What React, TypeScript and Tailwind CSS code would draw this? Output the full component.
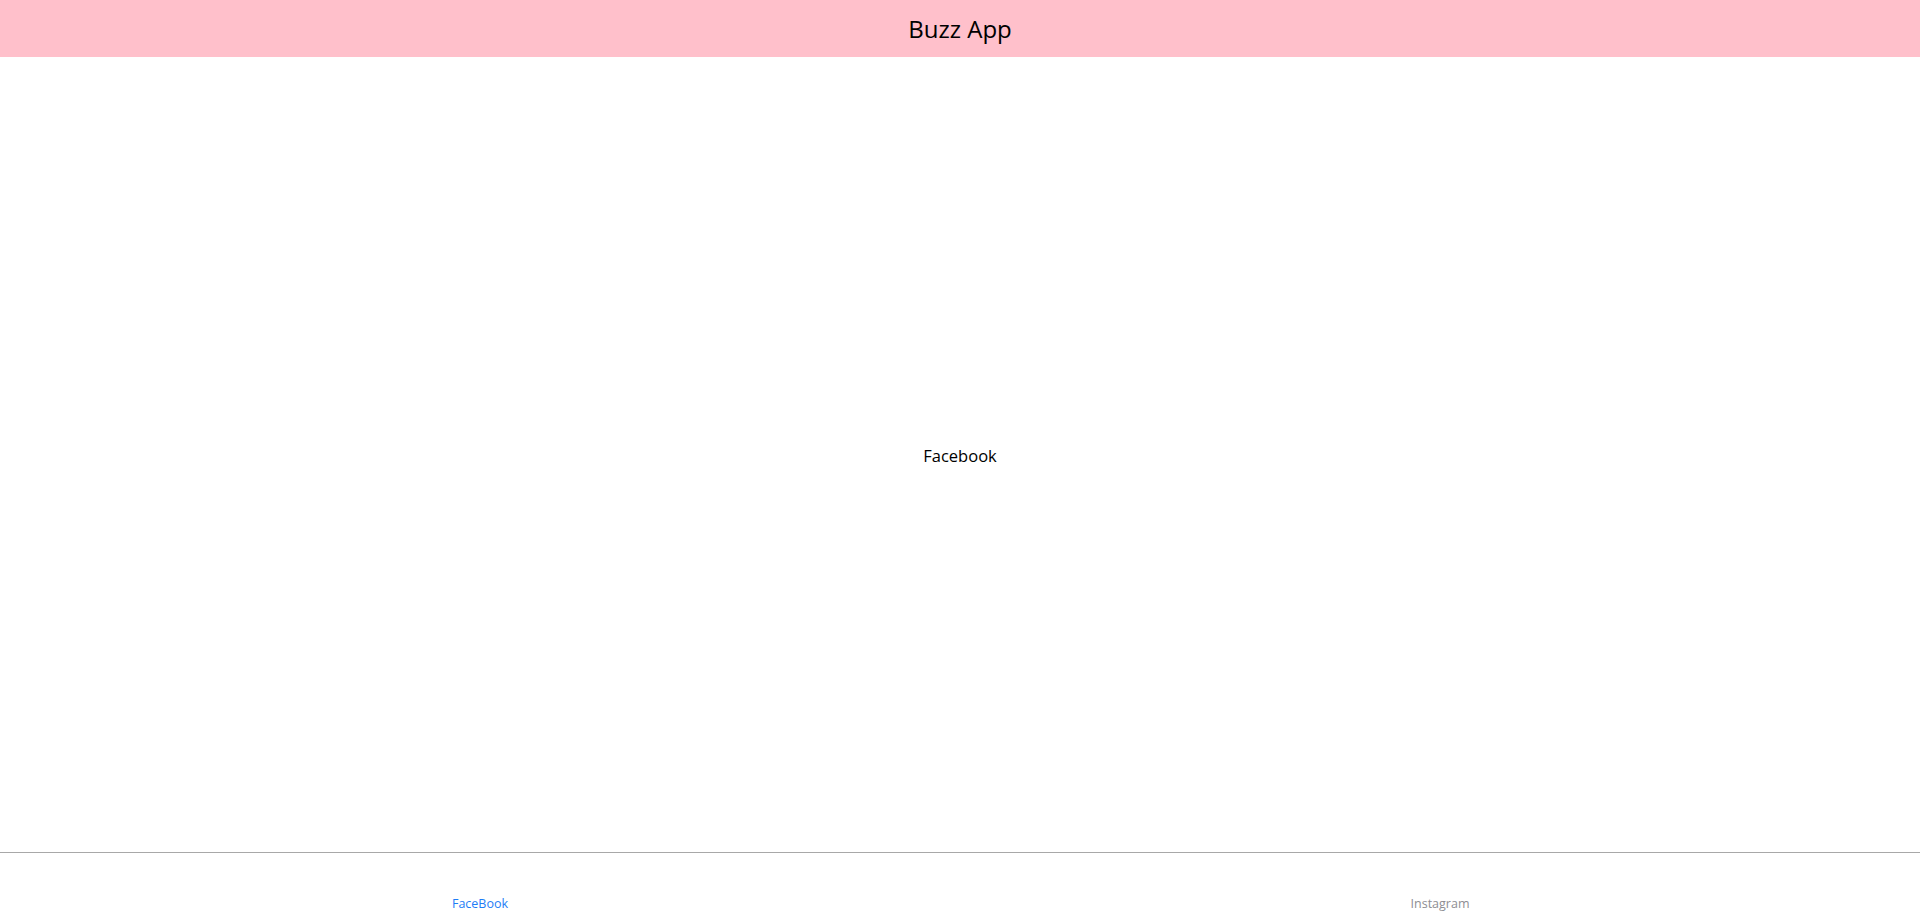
export default function App() {
  return (
    <div className="flex h-[912px] w-full flex-col bg-white" style={{ fontFamily: '"Open Sans", "Noto Sans", sans-serif' }}>
      <header className="flex h-[57px] shrink-0 items-center justify-center bg-[#ffc0cb]">
        <h1 className="text-[24px] leading-none text-black">Buzz App</h1>
      </header>
      <main className="flex flex-1 items-center justify-center pt-[3px]">
        <span className="text-[16.5px] text-black">Facebook</span>
      </main>
      <footer className="flex h-[60px] shrink-0 border-t border-[#a8a8a8]">
        <div className="flex flex-1 items-end justify-center">
          <span className="text-[12.5px] leading-4 text-[#1e7df6]">FaceBook</span>
        </div>
        <div className="flex flex-1 items-end justify-center">
          <span className="text-[12.5px] leading-4 text-[#8e8e93]">Instagram</span>
        </div>
      </footer>
    </div>
  );
}
